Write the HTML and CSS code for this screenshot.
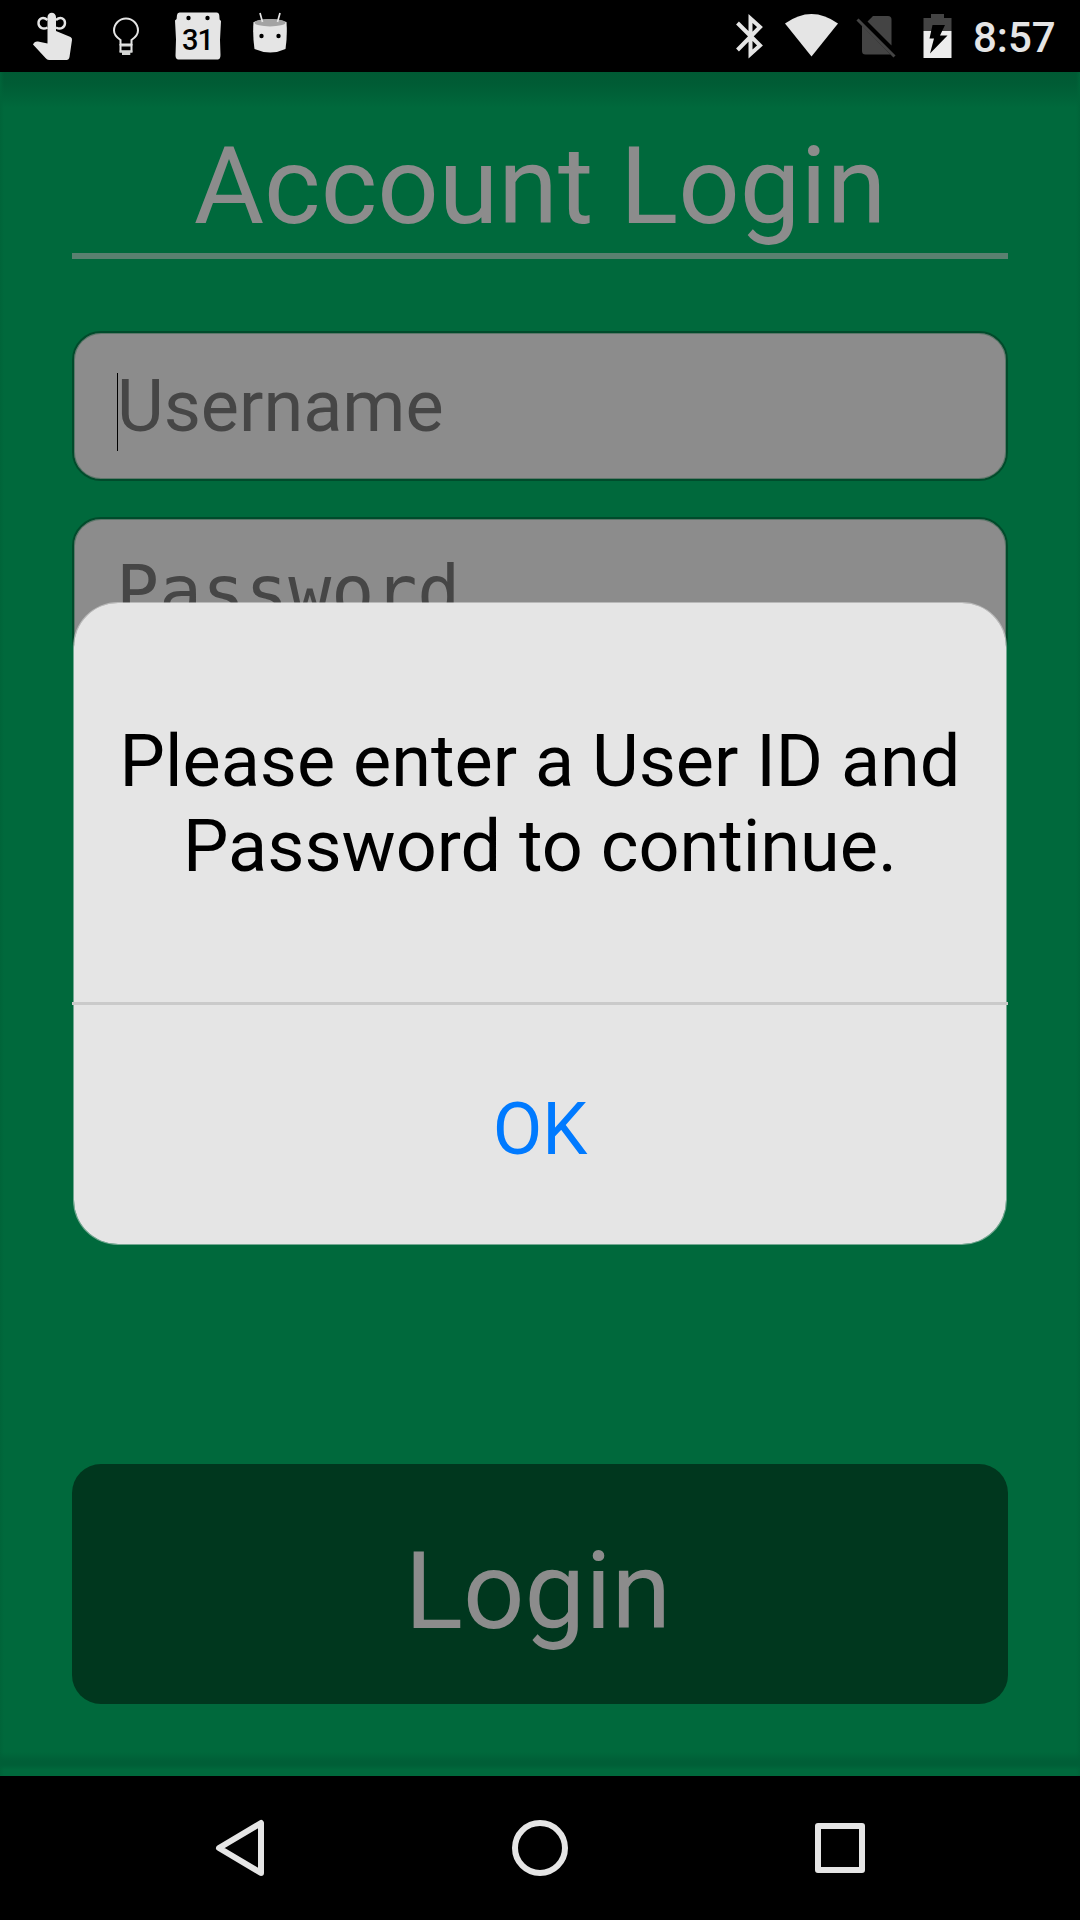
FILE: index.html
```html
<!DOCTYPE html>
<html lang="en">
<head>
<meta charset="utf-8">
<title>Account Login</title>
<link rel="stylesheet" href="styles.css">
</head>
<body>
<div class="screen">
  <header class="status-bar">
    <svg class="status-icons" viewBox="0 0 320 72" width="320" height="72" aria-hidden="true">
      <g fill="#e5e5e5">
        <path d="M47.500 31V17a4.200 4.200 0 0 1 8.500 0v14l14.500 6q1.800 1 1.500 3l-2.500 17q-.5 3-3 3H49q-2 0-3.500-2L33 44.500q1.500-3.500 5-3l9.500 2z"/>
        <g fill="none" stroke="#e5e5e5" stroke-width="2.400">
          <path d="M47.500 20C43 16 38.500 18.500 38.500 23s4.500 7 9 4.500M56 20c4.500-4 9-1.500 9 3s-4.500 7-9 4.500"/>
        </g>
      </g>
      <g fill="none" stroke="#e5e5e5" stroke-width="2">
        <path d="M120.500 44.500v-4.500c-4-2.700-6.500-5.500-6.500-9.500a12 12 0 0 1 24 0c0 4-2.500 6.800-6.500 9.500v4.500z"/>
        <path d="M120.500 44v7.500h11V44"/>
      </g>
      <path d="M119.700 50.500h12.600v2h-2V55h-8.300v-2.500h-2.300zM121 45h10v1.500h-10z" fill="#d4d6d4"/>
      <path d="M180 12.500h36.500q2.500 0 2.800 3l.3 4 1.400 1.500-1 19 .5 15q0 4-2.500 4.500h-40q-2.500-.5-2.500-4l.5-16-1-19 1.600-1.500.4-4q.3-2.500 2.500-2.500z" fill="#e5e5e5"/>
      <g fill="#000"><circle cx="188.500" cy="18" r="2.200"/><circle cx="207.500" cy="18" r="2.200"/></g>
      <text class="calendar-day" x="197.500" y="50" text-anchor="middle">31</text>
      <path d="M253.500 22q16.500-6 33 0 1 14-1 27-15 7-31 0-2-13-1-27z" fill="#e5e5e5"/>
      <ellipse cx="270" cy="22.700" rx="15.500" ry="3.700" fill="#a3a3a3"/>
      <path d="M260 13l2.500 9M280 13l-2.500 9" stroke="#e5e5e5" stroke-width="1.700" fill="none"/>
      <g fill="#000"><circle cx="261.500" cy="36" r="2.200"/><circle cx="278.500" cy="36" r="2.200"/></g>
    </svg>
    <div class="status-right">
      <svg viewBox="710 0 250 72" width="250" height="72" aria-hidden="true">
        <path d="M737.500 23l22.500 22.500L750.500 54V18.500L760 27 737.500 50" fill="none" stroke="#e5e5e5" stroke-width="4"/>
        <path d="M785 23.500Q811.500 4.500 838 23.500L811.500 56.500z" fill="#e5e5e5"/>
        <path d="M873 16h15q3.500 0 3.500 3.500v26L867.500 21.500zM862 25.500l28.500 29H865.500q-3.500 0-3.500-3.500z" fill="#444"/>
        <path d="M857.500 19.500l37 37" stroke="#444" stroke-width="3"/>
        <path d="M931 14h13v4h7.500v13h-28V18h7.500z" fill="#444"/>
        <path d="M923.500 31h28v27h-28z" fill="#ededed"/>
        <path d="M932.500 25h12.500l-5 10.500h7.500L930 53.500l4-15H929.500z" fill="#000"/>
      </svg>
      <span class="clock">8:57</span>
    </div>
  </header>

  <main class="login">
    <h1 class="title">Account Login</h1>
    <div class="field username"><span class="caret"></span>Username</div>
    <div class="field password">Password</div>
    <div class="login-button">Login</div>
  </main>

  <nav class="nav-bar">
    <svg viewBox="0 0 1080 144" width="1080" height="144" fill="none" stroke="#e5e5e5" stroke-width="6" stroke-linejoin="round" aria-hidden="true">
      <path d="M261 47v50L219 72z"/>
      <circle cx="540" cy="72" r="25"/>
      <rect x="818" y="50" width="44" height="44"/>
    </svg>
  </nav>

  <section class="dialog" role="alertdialog">
    <p class="message">Please enter a User ID and Password to continue.</p>
    <div class="ok">OK</div>
  </section>
</div>
</body>
</html>
```
FILE: styles.css
```css
* { box-sizing: border-box; }

body {
  margin: 0;
  font-family: Roboto, sans-serif;
  font-weight: 400;
}

.screen {
  position: relative;
  display: flex;
  flex-direction: column;
  width: 1080px;
  height: 1920px;
  overflow: hidden;
  background: #00693c;
}

.status-bar {
  display: flex;
  justify-content: space-between;
  height: 72px;
  background: #000;
}

.status-bar svg { display: block; }

.calendar-day {
  font: 500 29px Roboto, sans-serif;
  letter-spacing: -1px;
  fill: #000;
}

.status-right {
  display: flex;
  width: 370px;
}

.clock {
  flex: none;
  margin-left: 13px;
  color: #e5e5e5;
  font-size: 42px;
  font-weight: 500;
  line-height: 75px;
}

.login {
  display: flex;
  flex-direction: column;
  flex: 1;
  padding: 36px 72px 72px;
  background:
    linear-gradient(transparent calc(100% - 24px), #005f37 calc(100% - 15px), #005f37 calc(100% - 11px), transparent calc(100% - 6px)),
    linear-gradient(90deg, #006439 0, transparent 4px, transparent calc(100% - 4px), #006439 100%),
    linear-gradient(#005a34 0, #005c35 12px, #00693c 36px);
}

.title {
  height: 151px;
  margin: 0 0 72px;
  border-bottom: 6px solid #5a8070;
  color: #8c8c8c;
  font-size: 108px;
  font-weight: 400;
  line-height: 156px;
  text-align: center;
}

.field {
  position: relative;
  height: 150px;
  margin-bottom: 36px;
  padding-left: 43px;
  border: 2px solid #004b2b;
  border-radius: 29px;
  background: #8c8c8c;
  box-shadow: inset 0 0 0 1px #5c7669;
  color: #464646;
  font-size: 72px;
  line-height: 148px;
}

.password {
  font-family: "DejaVu Sans Mono", monospace;
  font-size: 71.500px;
  line-height: 146px;
  text-indent: -1px;
}

.caret {
  position: absolute;
  top: 40px;
  left: 43px;
  width: 1px;
  height: 78px;
  background: #000;
}

.login-button {
  height: 240px;
  margin-top: auto;
  padding-right: 4px;
  border-radius: 29px;
  background: #00371e;
  color: #8c8c8c;
  font-size: 108px;
  line-height: 254px;
  text-align: center;
}

.nav-bar {
  height: 144px;
  background: #000;
}

.nav-bar svg { display: block; }

.dialog {
  position: absolute;
  top: 602px;
  left: 73px;
  width: 934px;
  height: 643px;
  border: 1px solid rgba(229, 229, 229, 0.5);
  border-radius: 45px;
  background: #e5e5e5;
  background-clip: padding-box;
  text-align: center;
  font-size: 72px;
}

.message {
  height: 399px;
  margin: 0;
  padding: 116px 36px 0;
  color: #000;
  line-height: 85px;
}

.ok {
  height: 240px;
  margin: 0 -2px;
  border-top: 3px solid #cacaca;
  color: #007aff;
  line-height: 249px;
}
```
